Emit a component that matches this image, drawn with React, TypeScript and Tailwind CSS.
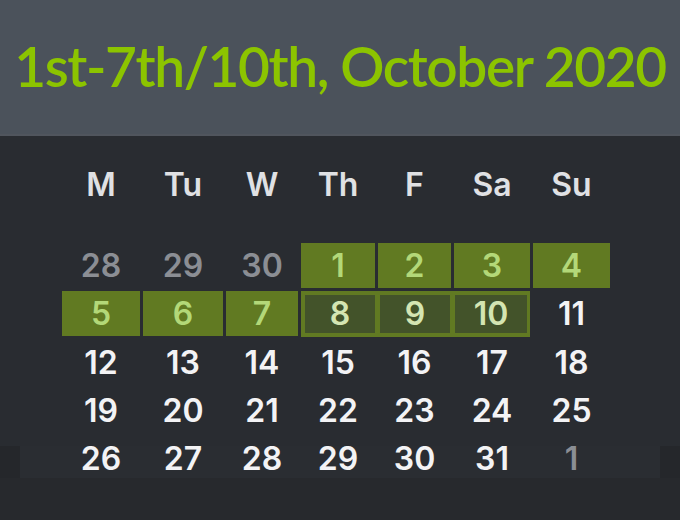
import React from "react";

type Kind = "muted" | "green" | "plain";
type Cell = { n: number; kind: Kind } | { frame: number[] };

const cols = "grid grid-cols-[78px_80px_72px_74px_73px_76px_77px] gap-[3px]";
const days = ["M", "Tu", "W", "Th", "F", "Sa", "Su"];

const rows: Cell[][] = [
  [
    { n: 28, kind: "muted" },
    { n: 29, kind: "muted" },
    { n: 30, kind: "muted" },
    { n: 1, kind: "green" },
    { n: 2, kind: "green" },
    { n: 3, kind: "green" },
    { n: 4, kind: "green" },
  ],
  [
    { n: 5, kind: "green" },
    { n: 6, kind: "green" },
    { n: 7, kind: "green" },
    { frame: [8, 9, 10] },
    { n: 11, kind: "plain" },
  ],
  [12, 13, 14, 15, 16, 17, 18].map((n) => ({ n, kind: "plain" as Kind })),
  [19, 20, 21, 22, 23, 24, 25].map((n) => ({ n, kind: "plain" as Kind })),
];

const lastRow: Cell[] = [
  ...[26, 27, 28, 29, 30, 31].map((n) => ({ n, kind: "plain" as Kind })),
  { n: 1, kind: "muted" },
];

function DayCell({ cell }: { cell: Cell }) {
  if ("frame" in cell) {
    return (
      <div className="col-span-3 h-[46px] bg-[#617a22] p-[4px]">
        <div className="grid h-full grid-cols-[70px_70px_72px] gap-[5px]">
          {cell.frame.map((n) => (
            <div
              key={n}
              className="flex items-center justify-center bg-[#43532a] text-[#d4e5b2]"
            >
              {n}
            </div>
          ))}
        </div>
      </div>
    );
  }
  const style =
    cell.kind === "green"
      ? "bg-[#617a22] text-[#b3d878]"
      : cell.kind === "muted"
      ? "text-[#8b8e94]"
      : "text-[#f3f3f5]";
  return (
    <div className={`flex h-[45px] items-center justify-center ${style}`}>
      {cell.n}
    </div>
  );
}

export default function App() {
  return (
    <div className="flex h-[520px] w-[680px] flex-col overflow-hidden bg-[#292c31]">
      {/* Title bar */}
      <div className="flex h-[136px] shrink-0 items-center justify-center border-b-[2px] border-[#50555d] bg-[#4b525b] pb-[1px]">
        <h1
          className="whitespace-nowrap text-[55px] font-semibold leading-none tracking-[-1.4px] text-[#8cc400]"
          style={{ fontFamily: "Lato, 'Open Sans', sans-serif" }}
        >
          1st-7th/10th, October 2020
        </h1>
      </div>

      {/* Calendar */}
      <div
        className="flex flex-1 flex-col text-[32px] font-semibold leading-none"
        style={{ fontFamily: "Inter, 'Liberation Sans', sans-serif" }}
      >
        <div className={`${cols} ml-[62px] mt-[26px] text-[#e0e1e4]`}>
          {days.map((d) => (
            <div key={d} className="flex h-[45px] items-center justify-center">
              {d}
            </div>
          ))}
        </div>

        <div className={`${cols} ml-[62px] mt-[36px]`}>
          {rows.flat().map((c, i) => (
            <DayCell key={i} cell={c} />
          ))}
        </div>

        <div className="mt-[13px] flex h-[32px] bg-[#25272b]">
          <div className="ml-[20px] w-[640px] bg-[#2a2d32]">
            <div className={`${cols} ml-[42px] -mt-[10px]`}>
              {lastRow.map((c, i) => (
                <DayCell key={i} cell={c} />
              ))}
            </div>
          </div>
        </div>
        <div className="flex-1 bg-[#27292d]" />
      </div>
    </div>
  );
}
